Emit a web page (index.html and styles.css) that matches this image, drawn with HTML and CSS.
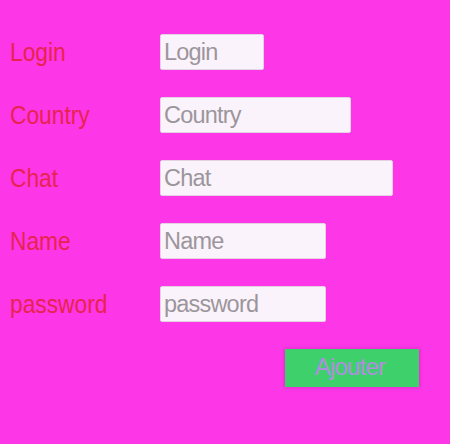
FILE: index.html
```html
<!DOCTYPE html>
<html>
<head>
<meta charset="utf-8">
<link rel="stylesheet" href="styles.css">
</head>
<body>
<form class="form">
  <div class="row">
    <label class="label"><span class="label-text">Login</span></label>
    <input class="field w-login" type="text" placeholder="Login">
  </div>
  <div class="row">
    <label class="label"><span class="label-text">Country</span></label>
    <input class="field w-country" type="text" placeholder="Country">
  </div>
  <div class="row">
    <label class="label"><span class="label-text">Chat</span></label>
    <input class="field w-chat" type="text" placeholder="Chat">
  </div>
  <div class="row">
    <label class="label"><span class="label-text">Name</span></label>
    <input class="field w-name" type="text" placeholder="Name">
  </div>
  <div class="row">
    <label class="label"><span class="label-text">password</span></label>
    <input class="field w-name" type="password" placeholder="password">
  </div>
  <div class="actions">
    <button class="btn" type="button">Ajouter</button>
  </div>
</form>
</body>
</html>
```
FILE: styles.css
```css
html, body {
  margin: 0;
  padding: 0;
  background: #fd37e7;
  width: 450px;
  height: 444px;
  overflow: hidden;
}
.form {
  padding: 34px 0 0 10px;
  display: flex;
  flex-direction: column;
  gap: 27px;
  font-family: "Liberation Sans", Arial, sans-serif;
}
.row {
  display: flex;
  align-items: center;
  height: 36px;
}
.label {
  width: 150px;
  font-size: 25px;
  color: #e8234f;
  line-height: 36px;
}
.label-text {
  display: inline-block;
  transform: scaleX(0.91);
  transform-origin: left center;
}
.field {
  box-sizing: border-box;
  height: 36px;
  margin: 0;
  padding: 0 3px;
  border: 1px solid #e2d2e2;
  border-radius: 2px;
  background: #fbf3fb;
  font-family: "Liberation Sans", Arial, sans-serif;
  font-size: 23.5px;
  letter-spacing: -0.8px;
  color: #555;
  outline: none;
}
.field::placeholder {
  color: #9b969b;
}
.w-login { width: 104px; }
.w-country { width: 191px; }
.w-chat { width: 233px; }
.w-name { width: 166px; }
.actions {
  display: flex;
  padding-left: 275px;
}
.btn {
  width: 134px;
  height: 38px;
  border: none;
  border-radius: 0;
  background: #3ed16b;
  color: #b28ce2;
  font-family: "Liberation Sans", Arial, sans-serif;
  font-size: 24px;
  letter-spacing: -0.8px;
  padding: 0 4px 2px 0;
  box-shadow: 0 0 3px 1px rgba(180, 30, 160, 0.35);
}
```
